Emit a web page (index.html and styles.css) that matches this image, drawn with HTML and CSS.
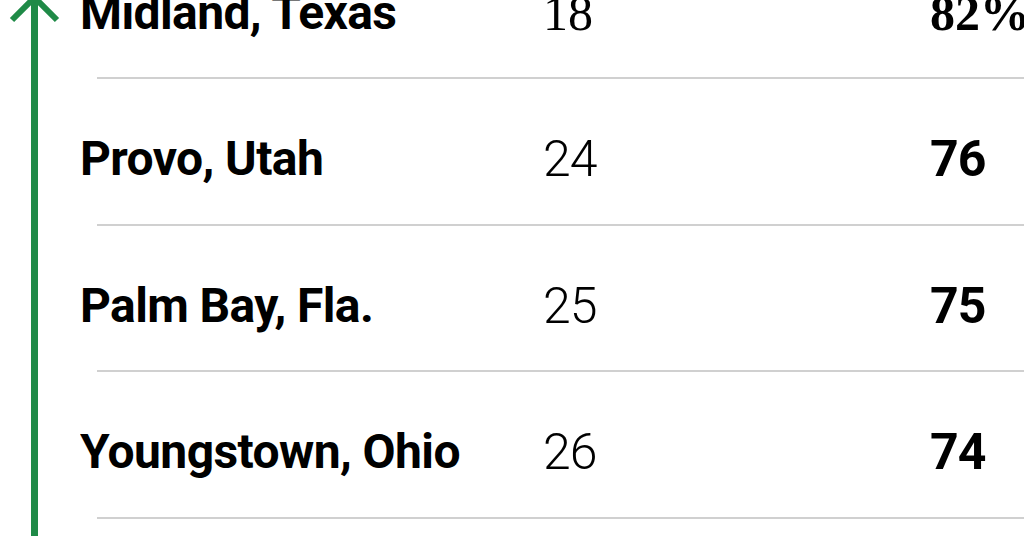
FILE: index.html
```html
<!DOCTYPE html>
<html lang="en">
<head>
	<title>metro rankings</title>
	<meta charset="utf-8" />
	<meta name="viewport" content="width=device-width,initial-scale=1" />
	<link rel="stylesheet" href="styles.css">
</head>
<body>
	<div class="chart">
		<div class="trend">
			<svg class="trend-arrow" viewBox="0 0 70 536" preserveAspectRatio="none">
				<line x1="34.5" y1="0" x2="34.5" y2="536" />
				<polyline points="12,20 34.5,-2.5 57,20" />
			</svg>
		</div>

		<div class="rows">
			<div class="row row-first">
				<div class="place">Midland, Texas</div>
				<div class="rank">18</div>
				<div class="share">82%</div>
			</div>
			<div class="row">
				<div class="place">Provo, Utah</div>
				<div class="rank">24</div>
				<div class="share">76</div>
			</div>
			<div class="row">
				<div class="place">Palm Bay, Fla.</div>
				<div class="rank">25</div>
				<div class="share">75</div>
			</div>
			<div class="row">
				<div class="place">Youngstown, Ohio</div>
				<div class="rank">26</div>
				<div class="share">74</div>
			</div>
		</div>
	</div>
</body>
</html>
```

FILE: styles.css
```css
:root {
	--text-color: #000;
	--rule-color: #d0d0d0;
	--arrow-color: #1f8a47;
	--row-height: 146.5px;
}

*,
*:before,
*:after {
	box-sizing: border-box;
	margin: 0;
	padding: 0;
}

body {
	height: 536px;
	overflow: hidden;
	background: #fff;
	color: var(--text-color);
	font-family: Roboto, "Liberation Sans", sans-serif;
}

.chart {
	display: flex;
	height: 536px;
}

.trend {
	flex: 0 0 80px;
	height: 100%;
}

.trend-arrow {
	display: block;
	width: 70px;
	height: 536px;
	fill: none;
	stroke: var(--arrow-color);
}

.trend-arrow line {
	stroke-width: 7;
}

.trend-arrow polyline {
	stroke-width: 6;
}

.rows {
	flex: 1;
	margin-top: -67.5px;
	overflow: hidden;
}

.row {
	display: grid;
	grid-template-columns: 446px 387px 1fr;
	height: var(--row-height);
	margin-left: 17px;
	padding-top: 55px;
	border-bottom: 2px solid var(--rule-color);
	font-size: 50px;
	line-height: 50px;
	white-space: nowrap;
}

.place {
	margin-left: -17px;
	font-size: 48px;
	font-weight: 700;
	letter-spacing: -0.6px;
}

.rank {
	font-weight: 300;
	letter-spacing: -1px;
}

.share {
	font-weight: 700;
	letter-spacing: -1px;
}

.row-first .rank,
.row-first .share {
	font-family: "Liberation Serif", serif;
	letter-spacing: 0;
}

.row-first .rank {
	font-weight: 400;
}
```
